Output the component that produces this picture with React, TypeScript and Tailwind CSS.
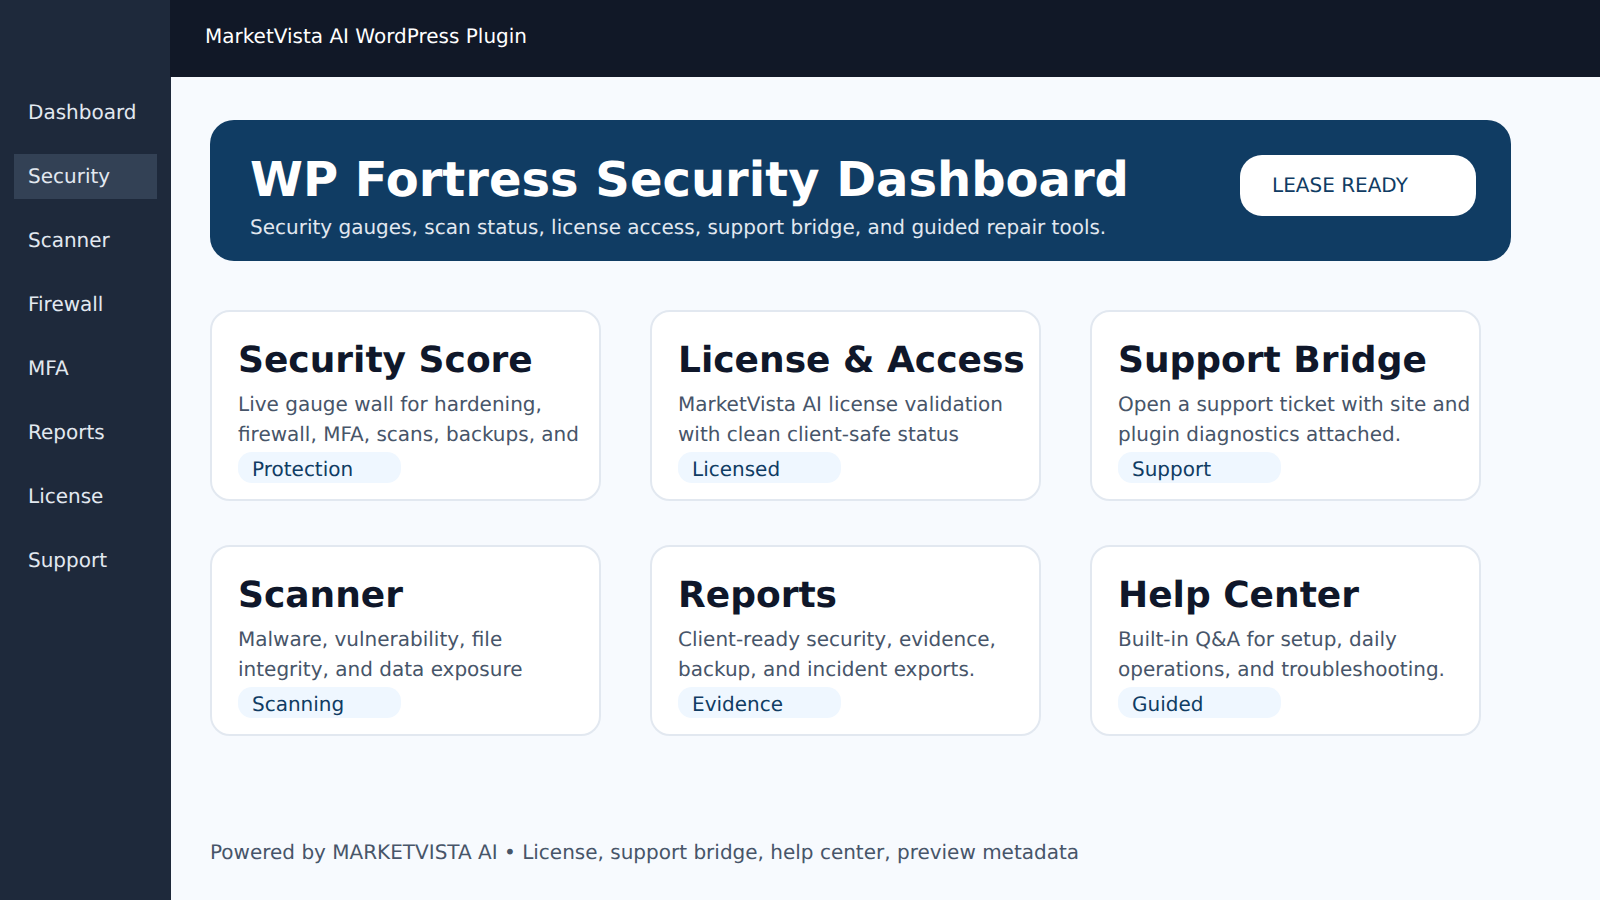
import React from 'react';

const navItems = ['Dashboard', 'Security', 'Scanner', 'Firewall', 'MFA', 'Reports', 'License', 'Support'];

const cards = [
  { title: 'Security Score', body: 'Live gauge wall for hardening, firewall, MFA, scans, backups, and', tag: 'Protection' },
  { title: 'License & Access', body: 'MarketVista AI license validation with clean client-safe status', tag: 'Licensed' },
  { title: 'Support Bridge', body: 'Open a support ticket with site and plugin diagnostics attached.', tag: 'Support' },
  { title: 'Scanner', body: 'Malware, vulnerability, file integrity, and data exposure', tag: 'Scanning' },
  { title: 'Reports', body: 'Client-ready security, evidence, backup, and incident exports.', tag: 'Evidence' },
  { title: 'Help Center', body: 'Built-in Q&A for setup, daily operations, and troubleshooting.', tag: 'Guided' },
];

export default function App() {
  return (
    <div className="flex h-screen w-full overflow-hidden bg-[#f7fafe] font-['DejaVu_Sans',sans-serif] [text-rendering:geometricPrecision]">
      <aside className="w-[171px] shrink-0 bg-[#1e293b] pt-[89px]">
        <nav className="flex flex-col gap-[19px]">
          {navItems.map((item) => (
            <div
              key={item}
              className={`ml-[14px] flex h-[45px] w-[143px] items-center pl-[14px] text-[20px] text-[#e2e8f0] ${item === 'Security' ? 'mt-[1px] mb-[-1px] bg-[#334155] pb-[2px]' : ''}`}
            >
              {item}
            </div>
          ))}
        </nav>
      </aside>

      <main className="flex min-w-0 flex-1 flex-col">
        <header className="-ml-px flex h-[77px] items-center bg-[#111827] pb-[6px] pl-[35px] text-[20px] text-white">
          MarketVista AI WordPress Plugin
        </header>

        <div className="flex flex-1 flex-col pl-[39px] pt-[43px]">
          <section className="flex h-[141px] w-[1301px] items-start justify-between rounded-[24px] bg-[#103c63] pl-[40px] pr-[35px]">
            <div className="pt-[32px]">
              <h1 className="text-[48px] font-bold leading-[56px] text-white">WP Fortress Security Dashboard</h1>
              <p className="mt-[7px] text-[20px] leading-[24px] text-[#e2e8f0]">
                Security gauges, scan status, license access, support bridge, and guided repair tools.
              </p>
            </div>
            <div className="mt-[35px] flex h-[61px] w-[236px] items-center rounded-[22px] bg-white pb-[2px] pl-[32px] text-[20px] text-[#103c63]">
              LEASE READY
            </div>
          </section>

          <div className="mt-[49px] grid grid-cols-[391px_391px_391px] gap-x-[49px] gap-y-[44px]">
            {cards.map((card) => (
              <div key={card.title} className="h-[191px] rounded-[20px] border-2 border-[#e2e8f0] bg-white pl-[26px] pt-[27px]">
                <h2 className="text-[36px] font-bold leading-[44px] text-[#0f172a]">{card.title}</h2>
                <p className="mt-[6px] w-[354px] text-[20px] leading-[30px] text-[#475569]">{card.body}</p>
                <span className="mt-[3px] flex h-[31px] w-[163px] items-center rounded-[14px] bg-[#eff7ff] pl-[14px] pt-[2px] text-[20px] text-[#103c63]">
                  {card.tag}
                </span>
              </div>
            ))}
          </div>

          <footer className="mt-auto pb-[36px] text-[20px] leading-[24px] text-[#475569]">
            Powered by MARKETVISTA AI • License, support bridge, help center, preview metadata
          </footer>
        </div>
      </main>
    </div>
  );
}
